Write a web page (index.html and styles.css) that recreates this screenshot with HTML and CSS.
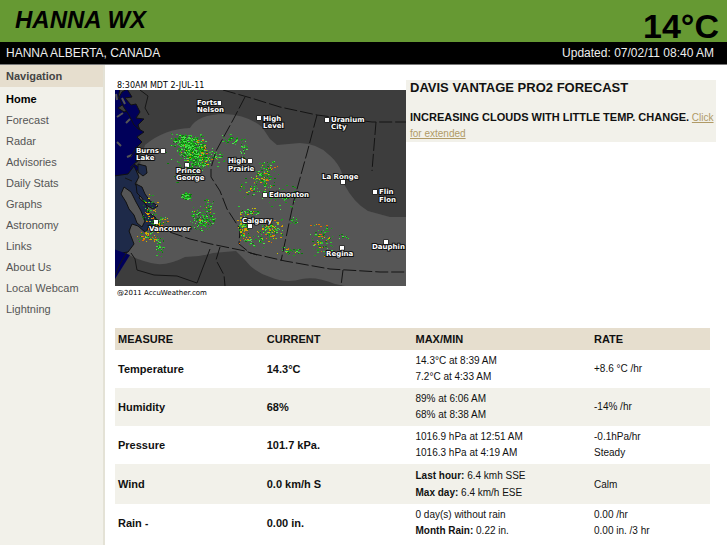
FILE: index.html
```html
<!DOCTYPE html>
<html lang="en">
<head>
<meta charset="utf-8">
<title>Hanna WX</title>
<link rel="stylesheet" href="styles.css">
</head>
<body>
<header class="banner">
  <h1 class="site-name">HANNA WX</h1>
  <div class="temp-now">14°C</div>
</header>
<div class="subbar">
  <span>HANNA ALBERTA, CANADA</span>
  <span class="updated">Updated: 07/02/11 08:40 AM</span>
</div>
<div class="page">
  <nav class="sidebar">
    <h2 class="nav-title">Navigation</h2>
    <ul class="nav-list">
      <li><a class="active" href="#">Home</a></li>
      <li><a href="#">Forecast</a></li>
      <li><a href="#">Radar</a></li>
      <li><a href="#">Advisories</a></li>
      <li><a href="#">Daily Stats</a></li>
      <li><a href="#">Graphs</a></li>
      <li><a href="#">Astronomy</a></li>
      <li><a href="#">Links</a></li>
      <li><a href="#">About Us</a></li>
      <li><a href="#">Local Webcam</a></li>
      <li><a href="#">Lightning</a></li>
    </ul>
  </nav>
  <main class="content">
    <section class="top">
      <svg class="radar" viewBox="115 80 291 216" role="img" aria-label="Weather radar of western Canada">
        <defs>
          <clipPath id="frame"><rect x="115" y="90" width="291" height="196"/></clipPath>
        </defs>
        <text class="caption" x="117" y="88">8:30AM MDT 2-JUL-11</text>
        <g clip-path="url(#frame)">
          <rect x="115" y="90" width="291" height="196" fill="#3d3d3d"/>
          <path fill="#565656" d="M127 254L133 210L141 159L145 145Q164 129 190 128Q198 114 224 114Q248 115 262 127L270 139L277 145L300 143Q318 144 328 154Q343 166 344 184Q354 203 368 211L390 217H406V286H345L335 284Q316 276 302 279Q286 284 270 277Q254 272 245 260L236 251L213 253Q200 257 185 257Q166 267 151 263Q138 260 127 254Z"/>
          <path fill="#00005a" stroke="#111" d="M114 89H120L118 98L125 103L118 108L124 112L132 109L137 115L131 120L140 121L137 128L144 132L137 137L142 142L137 147L142 150L135 154L139 160L134 164L140 168L134 173L130 176L114 176Z"/>
          <path fill="#00005a" stroke="#111" d="M127 89L132 97L125 98L131 105L136 104L140 112L136 118L144 119L138 125L140 130L134 125L129 115L123 106L119 97L122 92Z"/>
          <path fill="#1e2a49" stroke="#111" d="M114 176L128 174L134 166L139 177L135 184L142 192L139 198L146 204L149 213L155 217L160 224L155 228L149 225L146 233L138 226L132 224L129 231L134 244L128 252L121 253L114 254Z"/>
          <path fill="#565656" stroke="#111" d="M124 187L131 192L136 202L141 211L145 221L142 227L137 223L134 215L129 209L126 202L121 194Z"/>
          <path fill="#1e2a49" stroke="#111" d="M136 184L142 187L145 194L150 201L158 206L153 209L146 205L142 198L137 193ZM138 164L146 166L147 173L143 176L138 172Z"/>
          <path fill="#00005a" d="M114 249L130 255L115 279Z"/>
          <path fill="none" stroke="#555" stroke-width="2" d="M116 94L117 100M122 98L125 104M117 117L123 113M117 142L121 146M130 119L126 123M127 157L132 155"/>
          <path fill="none" stroke="#161616" d="M127 252L120 264L115 275M131 253L135 259L137 270L154 275L177 276L197 283L210 249M125 178L132 181M136 148L130 158M136 162L130 168M140 90L148 96L145 108L149 115"/>
          <g fill="none" stroke="#141414" stroke-dasharray="13 3">
            <path d="M223 90L251 98L280 107L317 115L372 122H406"/>
            <path d="M245 97L233 120L216 151L211 168V177L220 191L227 209L240 229L239 244L250 253L285 261L330 269L380 272H406"/>
            <path d="M317 115L307 153L294 200L281 261"/>
            <path d="M376 122L372 171M343 270L341 286"/>
            <path d="M155 227L190 239L211 244L245 251L257 255"/>
            <path d="M220 247L216 260L224 275L225 286"/>
          </g>
          <g id="echoes" shape-rendering="crispEdges"></g>
          <g class="marks">
            <rect x="257" y="116" width="4" height="4"/><rect x="325" y="118" width="4" height="4"/>
            <rect x="217" y="101" width="4" height="4"/><rect x="161" y="149" width="4" height="4"/>
            <rect x="185" y="163" width="4" height="4"/><rect x="248" y="159" width="4" height="4"/>
            <rect x="263" y="193" width="4" height="4"/><rect x="341" y="180" width="4" height="4"/>
            <rect x="373" y="190" width="4" height="4"/><rect x="154" y="220" width="4" height="4"/>
            <rect x="248" y="224" width="4" height="4"/><rect x="340" y="246" width="4" height="4"/>
            <rect x="384" y="240" width="4" height="4"/>
          </g>
          <g class="places">
            <text x="197" y="105">Forts</text><text x="197" y="112">Nelson</text>
            <text x="263" y="121">High</text><text x="263" y="128">Level</text>
            <text x="331" y="122">Uranium</text><text x="331" y="129">City</text>
            <text x="136" y="153">Burns</text><text x="136" y="160">Lake</text>
            <text x="176" y="173">Prince</text><text x="176" y="180">George</text>
            <text x="228" y="163">High</text><text x="228" y="171">Prairie</text>
            <text x="269" y="197">Edmonton</text>
            <text x="322" y="179">La Ronge</text>
            <text x="379" y="194">Flin</text><text x="379" y="202">Flon</text>
            <text x="149" y="231">Vancouver</text>
            <text x="242" y="223">Calgary</text>
            <text x="326" y="256">Regina</text>
            <text x="372" y="249">Dauphin</text>
          </g>
        </g>
        <text class="credit" x="117" y="295">@2011 AccuWeather.com</text>
      </svg>
      <div class="forecast">
        <h2>DAVIS VANTAGE PRO2 FORECAST</h2>
        <p><strong>INCREASING CLOUDS WITH LITTLE TEMP. CHANGE.</strong> <a href="#">Click for extended</a></p>
      </div>
    </section>
    <table class="readings">
      <thead>
        <tr><th class="c1">MEASURE</th><th class="c2">CURRENT</th><th class="c3">MAX/MIN</th><th class="c4">RATE</th></tr>
      </thead>
      <tbody>
        <tr><th>Temperature</th><td class="now">14.3°C</td><td>14.3°C at 8:39 AM<br>7.2°C at 4:33 AM</td><td>+8.6 °C /hr</td></tr>
        <tr><th>Humidity</th><td class="now">68%</td><td>89% at 6:06 AM<br>68% at 8:38 AM</td><td>-14% /hr</td></tr>
        <tr><th>Pressure</th><td class="now">101.7 kPa.</td><td>1016.9 hPa at 12:51 AM<br>1016.3 hPa at 4:19 AM</td><td>-0.1hPa/hr<br>Steady</td></tr>
        <tr class="wind"><th>Wind</th><td class="now">0.0 km/h S</td><td><b>Last hour:</b> 6.4 kmh SSE<br><b>Max day:</b> 6.4 km/h ESE</td><td>Calm</td></tr>
        <tr><th>Rain <small>-</small></th><td class="now">0.00 in.</td><td>0 day(s) without rain<br><b>Month Rain:</b> 0.22 in.</td><td>0.00 /hr<br>0.00 in. /3 hr</td></tr>
      </tbody>
    </table>
  </main>
</div>
<script src="radar.js"></script>
</body>
</html>
```
FILE: styles.css
```css
* { box-sizing: border-box; }
body {
  margin: 0;
  background: #fff;
  color: #111;
  font-family: "Liberation Sans", Arial, sans-serif;
  font-size: 11px;
}
.banner {
  display: flex;
  justify-content: space-between;
  height: 42px;
  padding: 0 8px 0 15px;
  background: #693;
  color: #000;
}
.site-name {
  margin: 0;
  font-size: 24px;
  font-style: italic;
  line-height: 40px;
}
.temp-now {
  font-size: 34px;
  font-weight: bold;
  line-height: 52px;
}
.subbar {
  display: flex;
  justify-content: space-between;
  padding: 0 13px 0 6px;
  background: #000;
  color: #eee;
  font-size: 12px;
  line-height: 22px;
  border-bottom: 1px solid #777;
}
.page { display: flex; min-height: calc(100vh - 65px); }
.sidebar {
  flex: 0 0 105px;
  background: #f2f1ea;
  border-right: 2px solid #e4e2d6;
}
.nav-title {
  margin: 0;
  padding-left: 6px;
  background: #e6dece;
  color: #444;
  font-size: 11px;
  line-height: 22px;
}
.nav-list { margin: 0; padding: 2px 0; list-style: none; }
.nav-list a {
  display: block;
  padding-left: 6px;
  color: #555;
  line-height: 21px;
  text-decoration: none;
}
.nav-list .active { color: #000; font-weight: bold; }
.content { flex: 1; min-width: 0; padding: 15px 11px 0 10px; }
.top { display: flex; align-items: flex-start; height: 248px; }
.radar { flex: none; width: 291px; height: 216px; }
.caption { font: 8px "DejaVu Sans", sans-serif; fill: #000; }
.credit { font: 7px "DejaVu Sans", sans-serif; fill: #000; }
.marks rect { fill: #fff; stroke: #111; stroke-width: 1; paint-order: stroke; }
.places text {
  font: bold 7px "DejaVu Sans", sans-serif;
  fill: #fff;
  stroke: #111;
  stroke-width: 2px;
  paint-order: stroke;
}
.forecast {
  flex: 1;
  min-width: 0;
  padding-left: 4px;
  background: #f2f1ea;
}
.forecast h2 { margin: 0 0 13px; font-size: 13px; line-height: 16px; }
.forecast p { margin: 0; font-size: 10px; line-height: 16px; }
.forecast strong { font-size: 11px; }
.forecast a { color: #b09a66; }
.readings {
  width: calc(100% - 6px);
  border-collapse: collapse;
  table-layout: fixed;
}
.readings th, .readings td {
  padding: 3px;
  text-align: left;
  vertical-align: middle;
}
.readings thead th { background: #e6dece; font-size: 11px; line-height: 16px; }
.readings tbody tr:nth-child(even) { background: #f2f1ea; }
.readings td { font-size: 10px; line-height: 16px; }
.readings .wind td { line-height: 17px; }
.readings tbody th, .readings .now { font-size: 11px; font-weight: bold; }
.readings small { font-size: 10px; }
.c1, .c2 { width: 25%; }
.c3 { width: 30%; }
.c4 { width: 20%; }
```
FILE: radar.js
```js
// Precipitation echoes: [x, y, spreadX, spreadY, count, share of strong echoes]
var cells = [
  [183, 140, 9, 5, 170, 0], [190, 148, 10, 10, 420, 0.03], [196, 158, 9, 9, 260, 0.02],
  [202, 152, 4, 12, 60, 0.4], [212, 157, 13, 7, 60, 0.1], [232, 139, 8, 4, 45, 0],
  [243, 150, 4, 8, 30, 0], [184, 166, 14, 12, 40, 0.1],
  [268, 167, 8, 5, 45, 0.2], [264, 178, 9, 7, 80, 0.25], [254, 187, 12, 8, 60, 0.2],
  [282, 197, 14, 9, 35, 0], [186, 196, 4, 3, 70, 0],
  [202, 219, 9, 9, 170, 0.02], [209, 205, 5, 5, 25, 0.2],
  [150, 209, 6, 12, 45, 0.4], [158, 222, 7, 6, 60, 0.5], [147, 235, 8, 5, 60, 0.5],
  [159, 247, 4, 7, 40, 0], [243, 226, 4, 14, 110, 0.45], [250, 213, 8, 5, 35, 0.2],
  [270, 230, 9, 8, 140, 0.35], [256, 241, 9, 5, 30, 0], [289, 251, 9, 3, 40, 0.15],
  [321, 239, 8, 12, 95, 0.25], [343, 236, 4, 3, 10, 0], [294, 221, 4, 3, 14, 0]
];
var seed = 7;
function rand() {
  seed = (seed * 16807) % 2147483647;
  return seed / 2147483647;
}
var greens = ["#0a7d0a", "#159a15", "#1f9c1f", "#32c832", "#4de04d"];
var strong = ["#d8a000", "#e07000", "#c8c000"];
var echoes = document.getElementById("echoes");
cells.forEach(function (c) {
  for (var i = 0; i < c[4]; i++) {
    var r = document.createElementNS("http://www.w3.org/2000/svg", "rect");
    r.setAttribute("x", Math.round(c[0] + (rand() + rand() - 1) * c[2] * 1.5));
    r.setAttribute("y", Math.round(c[1] + (rand() + rand() - 1) * c[3] * 1.5));
    r.setAttribute("width", rand() > 0.6 ? 2 : 1);
    r.setAttribute("height", 1);
    var set = rand() < c[5] ? strong : greens;
    r.setAttribute("fill", set[Math.floor(rand() * set.length)]);
    echoes.appendChild(r);
  }
});
```
